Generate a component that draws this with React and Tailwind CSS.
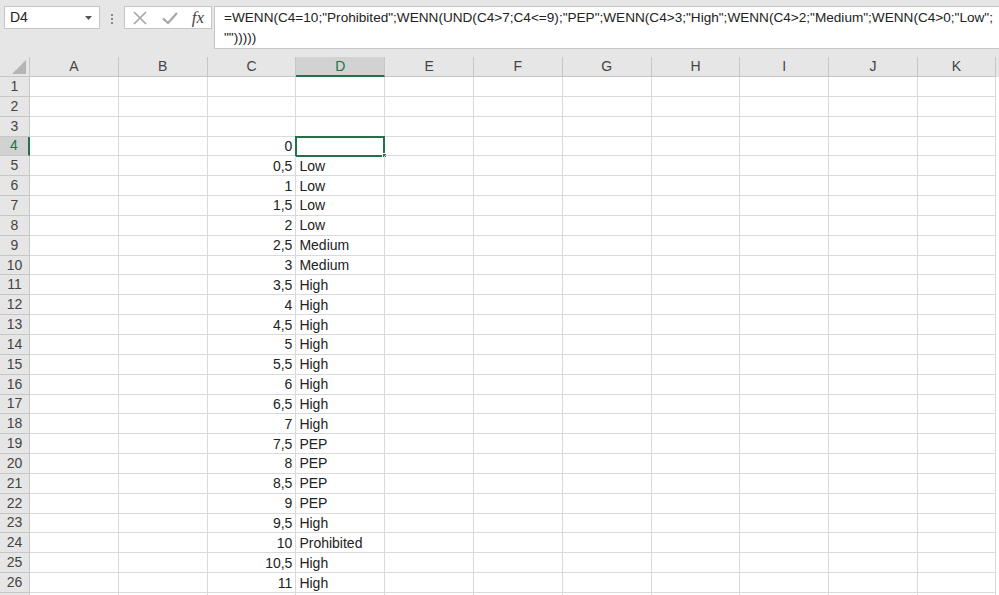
import React from "react";

const COLS = ["A", "B", "C", "D", "E", "F", "G", "H", "I", "J", "K"];

function label(v) {
  if (v === 10) return "Prohibited";
  if (v > 7 && v <= 9) return "PEP";
  if (v > 3) return "High";
  if (v > 2) return "Medium";
  if (v > 0) return "Low";
  return "";
}

function buildRows() {
  const rows = [];
  for (let r = 1; r <= 27; r++) {
    const cells = {};
    if (r >= 4 && r <= 26) {
      const v = (r - 4) * 0.5;
      cells.C = String(v).replace(".", ",");
      cells.D = label(v);
    }
    rows.push({ r, cells });
  }
  return rows;
}

const font = { fontFamily: '"Liberation Sans", Arial, sans-serif' };

function FormulaBar() {
  return (
    <div className="flex h-[57px] items-start bg-[#e6e6e6] pt-[6px] pl-[4px]">
      <div className="flex h-[23px] w-[96px] shrink-0 items-center justify-between border border-[#c6c6c6] bg-white pl-[5px] pr-[7px] text-[14px] text-[#222]">
        <span>D4</span>
        <svg width="7" height="4" viewBox="0 0 7 4">
          <path d="M0 0h7L3.5 4z" fill="#555" />
        </svg>
      </div>
      <div className="flex w-[24px] shrink-0 flex-col items-center justify-center gap-[2px] pt-[8px]">
        <span className="h-[2px] w-[2px] bg-[#888]" />
        <span className="h-[2px] w-[2px] bg-[#888]" />
        <span className="h-[2px] w-[2px] bg-[#888]" />
      </div>
      <div className="flex h-[23px] w-[88px] shrink-0 items-center justify-between border border-[#c6c6c6] bg-white pl-[7px] pr-[7px]">
        <svg width="16" height="16" viewBox="0 0 16 16">
          <path d="M2 2L14 14M14 2L2 14" stroke="#a6a6a6" strokeWidth="1.6" />
        </svg>
        <svg width="18" height="16" viewBox="0 0 18 16">
          <path d="M2 8.5L7 13L16 3" stroke="#a6a6a6" strokeWidth="2.2" fill="none" />
        </svg>
        <span className="text-[17px] italic text-[#444]" style={{ fontFamily: '"Liberation Serif", serif' }}>
          fx
        </span>
      </div>
      <div className="ml-[2px] flex h-[43px] min-w-0 flex-1 flex-col justify-center overflow-hidden border border-r-0 border-[#c6c6c6] bg-white pl-[9px] text-[13.6px] leading-[20px] text-[#222] whitespace-nowrap">
        <span>=WENN(C4=10;"Prohibited";WENN(UND(C4&gt;7;C4&lt;=9);"PEP";WENN(C4&gt;3;"High";WENN(C4&gt;2;"Medium";WENN(C4&gt;0;"Low";</span>
        <span>"")))))</span>
      </div>
    </div>
  );
}

function App() {
  const rows = buildRows();
  return (
    <div className="h-[595px] w-[999px] overflow-hidden bg-white" style={font}>
      <FormulaBar />
      <div className="flex h-[20px] bg-[#e6e6e6] text-[14px] text-[#444]">
        <div className="relative w-[30px] shrink-0 border-r border-b border-[#c6c6c6]">
          <svg className="absolute right-[3px] bottom-[2px]" width="14" height="14" viewBox="0 0 14 14">
            <path d="M14 0V14H0z" fill="#b5b5b5" />
          </svg>
        </div>
        {COLS.map((c) => (
          <div
            key={c}
            className={
              c === "D"
                ? "flex w-[88.8px] shrink-0 items-center justify-center border-r border-b-2 border-r-[#c6c6c6] border-b-[#217346] bg-[#d2d2d2] text-[#217346]"
                : c === "K"
                ? "flex w-[78px] shrink-0 items-center justify-center border-r border-b border-[#c6c6c6]"
                : "flex w-[88.8px] shrink-0 items-center justify-center border-r border-b border-[#c6c6c6]"
            }
          >
            {c}
          </div>
        ))}
      </div>
      {rows.map(({ r, cells }) => (
        <div key={r} className="flex h-[19.85px] text-[14px] text-[#222]">
          <div
            className={
              r === 4
                ? "flex w-[30px] shrink-0 items-center justify-center border-r-2 border-b border-r-[#217346] border-b-[#c6c6c6] bg-[#d2d2d2] text-[#217346]"
                : "flex w-[30px] shrink-0 items-center justify-center border-r border-b border-[#c6c6c6] bg-[#e6e6e6] text-[#444]"
            }
          >
            {r <= 26 ? r : ""}
          </div>
          {COLS.map((c) => {
            const selected = r === 4 && c === "D";
            return (
              <div
                key={c}
                className={
                  (c === "K" ? "w-[78px] " : "w-[88.8px] ") +
                  "relative flex shrink-0 items-center overflow-visible border-r border-b border-[#dadada] pt-[1px] " +
                  (c === "C" ? "justify-end pr-[3px]" : "pl-[3px]")
                }
              >
                {cells[c]}
                {selected && (
                  <>
                    <div className="absolute -top-[1px] -left-[1px] h-[21px] w-[90px] border-2 border-[#217346]" />
                    <div className="absolute -right-[3px] -bottom-[3px] h-[5px] w-[5px] border border-white bg-[#217346]" />
                  </>
                )}
              </div>
            );
          })}
        </div>
      ))}
    </div>
  );
}

export default App;
